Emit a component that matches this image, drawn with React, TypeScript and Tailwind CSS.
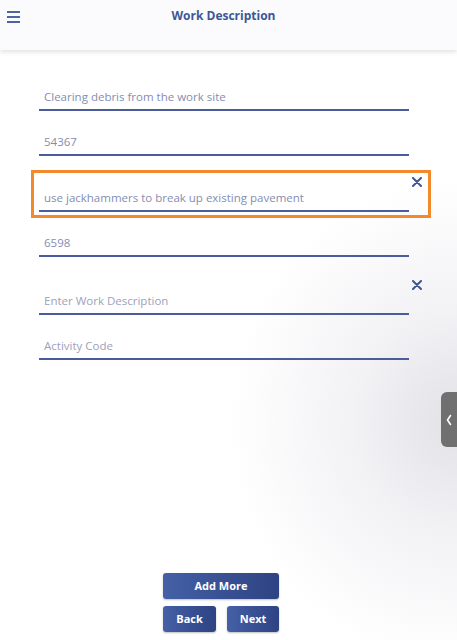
import React from "react";

const font = { fontFamily: '"Open Sans", "Liberation Sans", sans-serif' };

function XIcon() {
  return (
    <svg width="10" height="10" viewBox="0 0 10 10" className="block">
      <path d="M1 1 L9 9 M9 1 L1 9" stroke="#3f5592" strokeWidth="2" strokeLinecap="round" />
    </svg>
  );
}

function DescField({ value, placeholder, removable, highlight, tall }: { value?: string; placeholder: string; removable?: boolean; highlight?: boolean; tall?: boolean }) {
  return (
    <div className={`relative ${tall ? "h-[58px]" : "h-[56px]"} flex flex-col justify-end border-b-2 border-[#4a5c9c]`}>
      {highlight && (
        <div className="absolute left-[-8px] right-[-22px] top-[14px] bottom-[-8px] border-[3px] border-[#f28a2c] pointer-events-none" />
      )}
      {removable && (
        <div className={`absolute right-[-13px] ${tall ? "top-[23px]" : "top-[21px]"}`}>
          <XIcon />
        </div>
      )}
      <div className={`pl-[5px] pb-[4px] leading-[16px] text-[11.5px] ${value ? "text-[#858db2]" : "text-[#9ca2bb]"}`}>
        {value ?? placeholder}
      </div>
    </div>
  );
}

function CodeField({ value, placeholder }: { value?: string; placeholder: string }) {
  return (
    <div className="h-[45px] flex flex-col justify-end border-b-2 border-[#4a5c9c]">
      <div className={`pl-[5px] pb-[4px] leading-[16px] text-[11.5px] ${value ? "text-[#858db2]" : "text-[#9ca2bb]"}`}>
        {value ?? placeholder}
      </div>
    </div>
  );
}

export default function App() {
  return (
    <div
      style={font}
      className="relative w-[457px] h-[640px] overflow-hidden flex flex-col bg-[radial-gradient(ellipse_50%_38%_at_100%_66%,#e2e2e6_0%,#f2f2f5_45%,#ffffff_100%)]"
    >
      <header className="h-[50px] shrink-0 bg-[#fbfafd] shadow-[0_2px_5px_rgba(0,0,0,0.12)] relative flex items-start justify-center pt-[7px] pr-[10px]">
        <div className="absolute left-[7px] top-[11px] flex flex-col gap-[3px]">
          <div className="w-[13px] h-[2px] bg-[#4b64a3]" />
          <div className="w-[13px] h-[2px] bg-[#4b64a3]" />
          <div className="w-[13px] h-[2px] bg-[#4b64a3]" />
        </div>
        <h1 className="text-[12px] font-bold text-[#3b5795] leading-[18px]">Work Description</h1>
      </header>

      <main className="ml-[39px] w-[370px] mt-[5px] flex flex-col">
        <DescField value="Clearing debris from the work site" placeholder="Enter Work Description" />
        <CodeField value="54367" placeholder="Activity Code" />
        <DescField value="use jackhammers to break up existing pavement" placeholder="Enter Work Description" removable highlight />
        <CodeField value="6598" placeholder="Activity Code" />
        <DescField placeholder="Enter Work Description" removable tall />
        <CodeField placeholder="Activity Code" />
      </main>

      <div className="mt-auto pb-[8px] pr-[15px] flex flex-col items-center gap-[7px]">
        <button className="w-[116px] h-[26px] rounded-[3px] bg-[linear-gradient(90deg,#4560a6,#2d4383)] shadow-[0_1px_2px_rgba(0,0,0,0.25)] text-white text-[11px] font-bold">
          Add More
        </button>
        <div className="flex gap-[11px]">
          <button className="w-[53px] h-[26px] rounded-[3px] bg-[linear-gradient(90deg,#4560a6,#2d4383)] shadow-[0_1px_2px_rgba(0,0,0,0.25)] text-white text-[11px] font-bold">
            Back
          </button>
          <button className="w-[52px] h-[26px] rounded-[3px] bg-[linear-gradient(90deg,#4560a6,#2d4383)] shadow-[0_1px_2px_rgba(0,0,0,0.25)] text-white text-[11px] font-bold">
            Next
          </button>
        </div>
      </div>

      <div className="absolute right-0 top-[392px] w-[16px] h-[55px] rounded-l-[6px] bg-[#707070] flex items-center justify-center">
        <svg width="6" height="12" viewBox="0 0 6 12">
          <path d="M4.5 1.5 L1.5 6 L4.5 10.5" stroke="white" strokeWidth="1.6" fill="none" strokeLinecap="round" strokeLinejoin="round" />
        </svg>
      </div>
    </div>
  );
}
